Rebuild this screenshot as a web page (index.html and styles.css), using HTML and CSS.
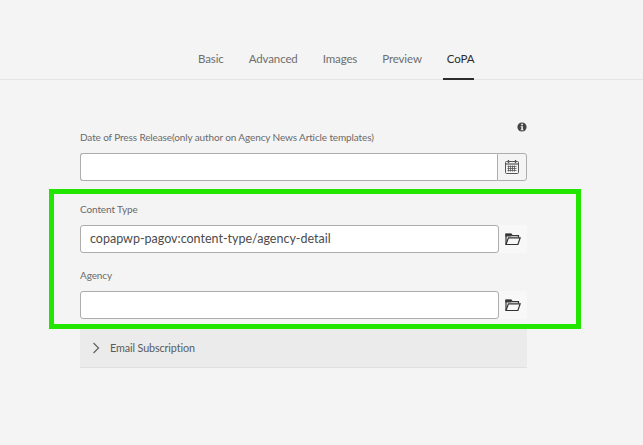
FILE: index.html
```html
<!DOCTYPE html>
<html lang="en">
<head>
<meta charset="utf-8">
<title>Page Properties</title>
<link rel="stylesheet" href="styles.css">
</head>
<body>
<nav class="tabs">
  <a class="tab">Basic</a>
  <a class="tab">Advanced</a>
  <a class="tab">Images</a>
  <a class="tab">Preview</a>
  <a class="tab active">CoPA</a>
</nav>
<main class="form">
  <div class="info-row">
    <svg class="info" viewBox="0 0 10 10" width="10" height="10"><circle cx="5" cy="5" r="4.6" fill="#444"/><rect x="4.2" y="1.7" width="1.7" height="1.6" fill="#f4f4f4"/><path d="M3.6 4.2H5.9V7.4H6.6V8.3H3.6V7.4H4.3V5.1H3.6Z" fill="#f4f4f4"/></svg>
  </div>
  <section class="field first">
    <label class="label">Date of Press Release(only author on Agency News Article templates)</label>
    <div class="group">
      <div class="input joined"></div>
      <button class="btn bordered">
        <svg viewBox="0 0 16 16" width="16" height="16" fill="none" stroke="#555"><rect x="1.5" y="2.5" width="13" height="12" rx="1"/><path d="M1.5 5H14.5" stroke-width="1.2"/><path d="M4.5 1V4M11.5 1V4" stroke-width="1.3"/><path d="M3.5 7.5H12.5M3.5 9.5H12.5M3.5 11.5H12.5M4.5 6.5V12.5M6.5 6.5V12.5M8.5 6.5V12.5M10.5 6.5V12.5" stroke-width="0.8"/></svg>
      </button>
    </div>
  </section>
  <section class="field second">
    <label class="label">Content Type</label>
    <div class="group">
      <div class="input square">copapwp-pagov:content-type/agency-detail</div>
      <button class="btn">
        <svg viewBox="0 0 16 14" width="16" height="14" fill="none" stroke="#333" stroke-width="1.2"><path d="M1 12.5V2H6L7.3 3.6H13.5V5.5" /><path d="M1 12.5L3.4 5.8H15.2L12.9 12.5Z"/><path d="M1 2.4H6V3.8H1Z" fill="#333"/></svg>
      </button>
    </div>
  </section>
  <section class="field third">
    <label class="label">Agency</label>
    <div class="group">
      <div class="input square"></div>
      <button class="btn">
        <svg viewBox="0 0 16 14" width="16" height="14" fill="none" stroke="#333" stroke-width="1.2"><path d="M1 12.5V2H6L7.3 3.6H13.5V5.5" /><path d="M1 12.5L3.4 5.8H15.2L12.9 12.5Z"/><path d="M1 2.4H6V3.8H1Z" fill="#333"/></svg>
      </button>
    </div>
  </section>
  <section class="accordion">
    <svg viewBox="0 0 8 12" width="8" height="12" fill="none" stroke="#666" stroke-width="1.3"><path d="M1.5 1L6.5 6L1.5 11"/></svg>
    <span>Email Subscription</span>
  </section>
</main>
<div class="highlight"></div>
</body>
</html>
```
FILE: styles.css
```css
* { box-sizing: border-box; }
html, body { margin: 0; height: 100%; }
body {
  background: #f4f4f4;
  font-family: "Lato", "Liberation Sans", sans-serif;
  color: #4b4b4b;
  position: relative;
  overflow: hidden;
}
.tabs {
  height: 80px;
  padding-left: 198px;
  display: flex;
  align-items: flex-end;
  gap: 25px;
  border-bottom: 1px solid #e4e4e4;
}
.tab {
  font-size: 11.5px;
  letter-spacing: -0.12px;
  line-height: 16px;
  color: #6e6e6e;
  padding-bottom: 11px;
  height: 28px;
}
.tab.active {
  color: #2c2c2c;
  border-bottom: 2px solid #2c2c2c;
  margin-left: -4px;
  padding: 0 0 10px 4px;
  margin-bottom: -1px;
  height: 29px;
}
.form {
  width: 447px;
  margin-left: 80px;
  display: flex;
  flex-direction: column;
}
.info-row {
  display: flex;
  justify-content: flex-end;
  padding: 42px 0 0 0;
  height: 53px;
}
.info { display: block; }
.field.first { margin-top: -3px; }
.field.second { margin-top: 21px; }
.field.third { margin-top: 15px; }
.label {
  display: block;
  font-size: 10px;
  letter-spacing: -0.12px;
  line-height: 14px;
  color: #6a6a6a;
  margin-bottom: 9px;
}
.group { display: flex; height: 28px; }
.input {
  flex: 1;
  background: #fff;
  border: 1px solid #adadad;
  border-radius: 3px;
  font-size: 12.5px;
  line-height: 26px;
  padding-left: 9px;
  color: #4b4b4b;
}
.input.joined { border-radius: 3px 0 0 3px; border-right: 0; }
.btn {
  width: 28px;
  padding: 0;
  background: #f8f8f8;
  border: 0;
  border-radius: 0 3px 3px 0;
  display: flex;
  align-items: center;
  justify-content: center;
}
.btn.bordered {
  width: 30px;
  background: #f4f4f4;
  border: 1px solid #adadad;
}
.accordion {
  margin-top: 9px;
  height: 40px;
  background: #ebebeb;
  border-bottom: 1px solid #e0e0e0;
  display: flex;
  align-items: center;
  gap: 10px;
  padding-left: 12px;
  font-size: 10.8px;
  letter-spacing: -0.12px;
  color: #5a5a5a;
}
.highlight {
  position: absolute;
  left: 49px;
  top: 189px;
  width: 532px;
  height: 140px;
  border: 5px solid #22e600;
}
```
